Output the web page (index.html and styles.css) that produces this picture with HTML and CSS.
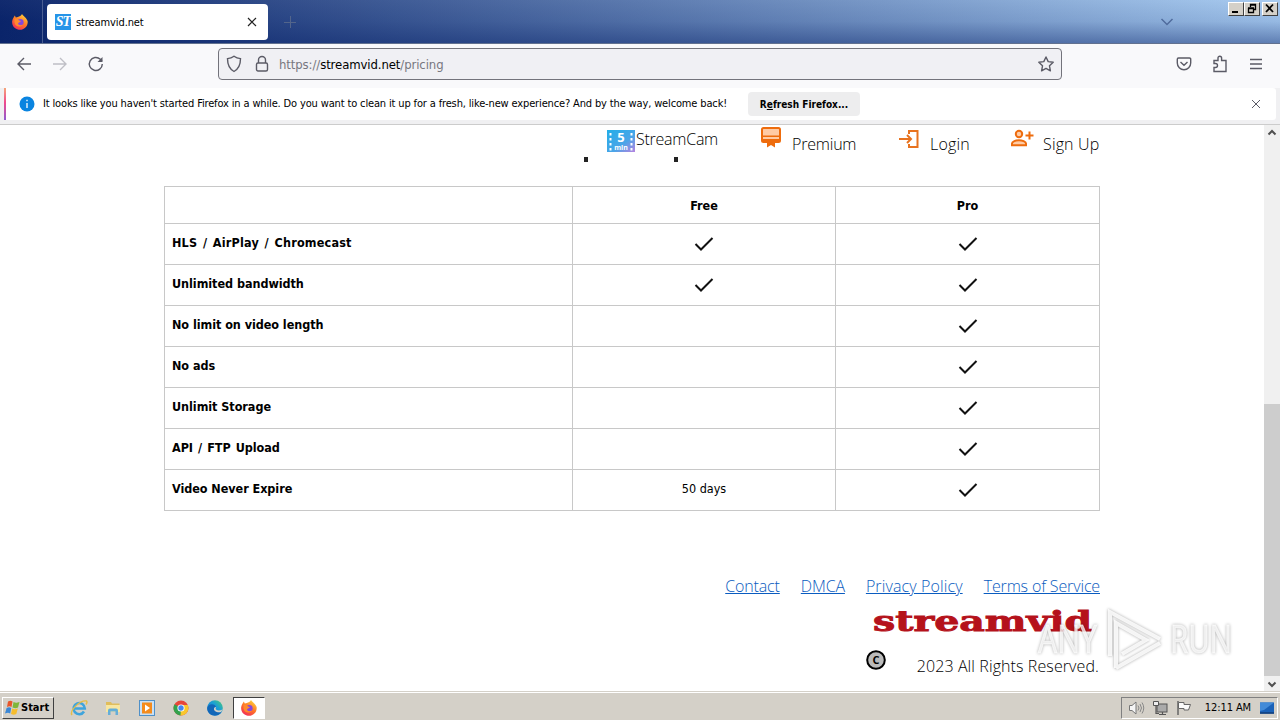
FILE: index.html
```html
<!DOCTYPE html>
<html lang="en">

<head>
    <meta charset="utf-8">
    <title>streamvid.net</title>
    <link rel="stylesheet" href="styles.css">
</head>

<body>
    <!-- shared shapes -->
    <svg class="defs" width="0" height="0">
        <defs>
            <linearGradient id="fire" x1="0.8" y1="0" x2="0.2" y2="1">
                <stop offset="0" stop-color="#ffd83a" />
                <stop offset="0.5" stop-color="#ff7427" />
                <stop offset="1" stop-color="#f0275f" />
            </linearGradient>
            <linearGradient id="film" x1="0" y1="0" x2="1" y2="1">
                <stop offset="0" stop-color="#21aee8" />
                <stop offset="0.6" stop-color="#4aa5e8" />
                <stop offset="1" stop-color="#b783e0" />
            </linearGradient>
            <linearGradient id="edge" x1="0" y1="1" x2="1" y2="0">
                <stop offset="0" stop-color="#1674c9" />
                <stop offset="0.6" stop-color="#1a9fd6" />
                <stop offset="1" stop-color="#4fcf6d" />
            </linearGradient>
            <symbol id="firefox" viewBox="0 0 16 16">
                <path d="M10 0c1 2 5 4 5.700 7.500A7.800 7.800 0 1 1 1.600 3.500L2.800 1.500l1 2 2-.6C7.500 2.500 9 2 10 0z" fill="url(#fire)" />
                <circle cx="8.300" cy="8.200" r="3.300" fill="#8548dc" />
                <path d="M2.500 5c2-1 4 0 4.500 1.500L9 7c-.5 1.500-2.500 1-3 2.500.5 2 3 2 5 1-2 3.500-8 2.500-8.500-2z" fill="#ff8a2d" />
            </symbol>
            <symbol id="check" viewBox="0 0 20 16">
                <path d="M1.500 8l5.500 5.500L18.500 2" fill="none" stroke="#111" stroke-width="2" />
            </symbol>
        </defs>
    </svg>

    <div class="titlebar">
        <div class="ff-view"><svg width="16" height="16"><use href="#firefox" /></svg></div>
        <div class="tab">
            <span class="favicon"><i>ST</i></span>
            <span class="tab-title">streamvid.net</span>
            <svg class="tab-close" width="10" height="10" viewBox="0 0 10 10"><path d="M1 1l8 8M9 1L1 9" stroke="#222" stroke-width="1.200" /></svg>
        </div>
        <svg class="new-tab" width="12" height="12" viewBox="0 0 12 12"><path d="M6.500 0v12M0 6.500h12" stroke="#53658b" /></svg>
        <svg class="all-tabs" width="14" height="8" viewBox="0 0 14 8"><path d="M1.500 1L7 6.500 12.500 1" fill="none" stroke="#506c9d" stroke-width="1.500" /></svg>
        <div class="win-buttons">
            <span><svg width="14" height="11"><path d="M3 9h6" stroke="#000" stroke-width="2" /></svg></span>
            <span><svg width="14" height="11"><path d="M5.500 4V1.500h5V6.500H8.500M5 2h6M3.500 5.500h5v4h-5zM3 5h6" fill="none" stroke="#000" stroke-width="1.300" /></svg></span>
            <span class="close"><svg width="14" height="11"><path d="M3 1.500l7 7.500M10 1.500L3 9" stroke="#000" stroke-width="1.800" /></svg></span>
        </div>
    </div>

    <div class="toolbar">
        <svg class="back" width="16" height="14" viewBox="0 0 16 14"><path d="M15 7H2M8 1L2 7l6 6" /></svg>
        <svg class="forward" width="16" height="14" viewBox="0 0 16 14"><path d="M1 7h13M8 1l6 6-6 6" /></svg>
        <svg class="reload" width="16" height="16" viewBox="0 0 16 16"><path d="M14.300 8a6.500 6.500 0 1 1-2-4.700L14 5" /><path d="M14.500 1v5h-5z" fill="#5b5b66" stroke="none" /></svg>
        <div class="urlbar">
            <svg class="shield" width="16" height="18" viewBox="0 0 16 18"><path d="M8 1.200c2 1.500 4 2.200 6.500 2.400 0 6.500-1.500 10.300-6.500 12.900C3 13.900 1.500 10.100 1.500 3.600 4 3.400 6 2.700 8 1.200z" /></svg>
            <svg class="lock" width="14" height="18" viewBox="0 0 14 18"><rect x="1.500" y="8" width="11" height="8" rx="1.500" /><path d="M3.500 8V5a3.500 3.500 0 0 1 7 0v3" /></svg>
            <span class="url">https://<b>streamvid.net</b>/pricing</span>
            <svg class="star" width="18" height="18" viewBox="0 0 18 18"><path d="M9 2l2.200 4.600 5 .7-3.700 3.500.9 5L9 13.400l-4.400 2.400.9-5L1.800 7.300l5-.7z" stroke-linejoin="round" /></svg>
        </div>
        <svg class="pocket" width="16" height="16" viewBox="0 0 16 16"><path d="M2.500 2h11a1.200 1.200 0 0 1 1.200 1.200V7a6.700 6.700 0 0 1-13.400 0V3.200A1.200 1.200 0 0 1 2.500 2zM4.500 6L8 9.300 11.500 6" /></svg>
        <svg class="ext" width="16" height="18" viewBox="0 0 16 18"><path d="M2 8.500V5.500h4V3a1.800 1.800 0 0 1 3.600 0v2.500H14V16.500H2v-4h1.500a2 2 0 0 0 0-4z" /></svg>
        <svg class="menu" width="14" height="12" viewBox="0 0 14 12"><path d="M1 1.500h12M1 6h12M1 10.500h12" /></svg>
    </div>

    <div class="notice">
        <div class="notice-inner">
            <svg class="info" width="16" height="16" viewBox="0 0 16 16"><circle cx="8" cy="8" r="7.500" fill="#0a84e0" /><path d="M8 7v5M8 3.800v1.500" stroke="#fff" stroke-width="1.300" /></svg>
            <span class="notice-text">It looks like you haven't started Firefox in a while. Do you want to clean it up for a fresh, like-new experience? And by the way, welcome back!</span>
            <button class="refresh">R<u>e</u>fresh Firefox...</button>
            <svg class="notice-close" width="10" height="10" viewBox="0 0 10 10"><path d="M1 1l8 8M9 1L1 9" stroke="#5b5b66" /></svg>
        </div>
    </div>

    <div class="viewport">
        <main>
            <nav>
                <a class="cam">
                    <svg width="28" height="22" viewBox="0 0 28 22">
                        <rect width="28" height="22" fill="url(#film)" />
                        <path d="M3.500 3v18M24.500 3v18" stroke="#fff" stroke-width="2" stroke-dasharray="2.500 2.500" />
                        <text x="14" y="12" text-anchor="middle" class="cam-num">5</text>
                        <text x="14" y="19.500" text-anchor="middle" class="cam-min">min</text>
                    </svg><span>StreamCam</span>
                </a>
                <a class="premium">
                    <svg width="20" height="22" viewBox="0 0 20 22"><rect x="1" y="1" width="18" height="14" rx="1.500" fill="#ffcba5" stroke="#ee6c0d" stroke-width="2" /><path d="M1 8.500h18V10H1zM1 12h18v3H1zM6 14h8v6.500l-4-2.500-4 2.500z" fill="#ee6c0d" /></svg>
                    <span>Premium</span>
                </a>
                <a class="login">
                    <svg width="22" height="20" viewBox="0 0 22 20"><path d="M11 5V2h8.500v16H11v-3M1 10h12M9 6l4 4-4 4" fill="none" stroke="#e8731f" stroke-width="2" /></svg>
                    <span>Login</span>
                </a>
                <a class="signup">
                    <svg width="24" height="18" viewBox="0 0 24 18"><g fill="#ffcba5" stroke="#ee6c0d" stroke-width="2"><circle cx="9" cy="5" r="3.200" /><path d="M2 16.200v-1.700c0-2 4-3.300 7-3.300s7 1.300 7 3.300v1.700zM19.500 2.500v8M15.500 6.500h8" /></g></svg>
                    <span>Sign Up</span>
                </a>
            </nav>
            <div class="dots"><i></i><i></i></div>

            <table>
                <tr><th></th><th class="free">Free</th><th>Pro</th></tr>
                <tr><th class="slashed">HLS / AirPlay / Chromecast</th><td><svg><use href="#check" /></svg></td><td><svg><use href="#check" /></svg></td></tr>
                <tr><th>Unlimited bandwidth</th><td><svg><use href="#check" /></svg></td><td><svg><use href="#check" /></svg></td></tr>
                <tr><th>No limit on video length</th><td></td><td><svg><use href="#check" /></svg></td></tr>
                <tr><th>No ads</th><td></td><td><svg><use href="#check" /></svg></td></tr>
                <tr><th>Unlimit Storage</th><td></td><td><svg><use href="#check" /></svg></td></tr>
                <tr><th class="api">API / FTP Upload</th><td></td><td><svg><use href="#check" /></svg></td></tr>
                <tr><th>Video Never Expire</th><td class="days">50 days</td><td><svg><use href="#check" /></svg></td></tr>
            </table>

            <footer>
                <div class="links">
                    <a href="#">Contact</a>
                    <a href="#">DMCA</a>
                    <a href="#" class="privacy">Privacy Policy</a>
                    <a href="#">Terms of Service</a>
                </div>
                <svg class="logo" width="220" height="28"><text x="0" y="24" textLength="219" lengthAdjust="spacingAndGlyphs">streamvid</text></svg>
                <div class="copy">
                    <svg width="20" height="20" viewBox="0 0 20 20"><circle cx="10" cy="10" r="8.800" fill="#bbb" stroke="#000" stroke-width="2" /><text x="10" y="14" text-anchor="middle" class="copy-c">C</text></svg>
                    <span>2023 All Rights Reserved.</span>
                </div>
            </footer>
        </main>
        <div class="scrollbar">
            <svg width="10" height="7" viewBox="0 0 10 7"><path d="M1.500 5.500L5 2l3.500 3.500" fill="none" stroke="#505050" stroke-width="2" /></svg>
            <div class="thumb"></div>
            <svg width="10" height="7" viewBox="0 0 10 7"><path d="M1.500 1.500L5 5l3.500-3.500" fill="none" stroke="#505050" stroke-width="2" /></svg>
        </div>
        <svg class="watermark" width="200" height="66" viewBox="0 0 200 66">
            <text x="2" y="46" textLength="59" lengthAdjust="spacingAndGlyphs">ANY</text>
            <path d="M74 49V5l50 27M80 61l44-25M80 61V16l30 17-24 14" />
            <text x="134" y="46" textLength="62" lengthAdjust="spacingAndGlyphs">RUN</text>
        </svg>
    </div>

    <div class="taskbar">
        <div class="start">
            <svg width="15" height="14" viewBox="0 0 15 14"><path d="M3 .5c2-1 3-1 4.500 0L6.500 6C5 5 4 5 2 6z" fill="#e8562a" /><path d="M8.500 1c2 1 3 1 6 0l-1.500 5.500c-2 1-3 1-5.500 0z" fill="#7fb63a" /><path d="M1.600 7c2-1 3-1 4.600 0l-1 5.500C3.500 11.500 2.500 11.500 0 12.500z" fill="#3a87d6" /><path d="M7.200 7.500c2 1 3 1 5.600 0L11.300 13c-2 1-3 1-5.300 0z" fill="#f6bd2d" /></svg>
            Start
        </div>
        <svg class="ie" width="18" height="18" viewBox="0 0 18 18"><path d="M14 12.500A5.600 5.600 0 1 1 14.800 9.500H5" fill="none" stroke="#3fa4dc" stroke-width="2.600" /><path d="M2 16C-1 12 10 1 16.500 2c1 1 .2 2.500-.5 3.500" fill="none" stroke="#e5bd47" stroke-width="1.400" /></svg>
        <svg width="18" height="18" viewBox="0 0 18 18"><path d="M2 3h5l1 1.500h7.500V13H2z" fill="#e0bd5c" /><path d="M2 6h14v7H2z" fill="#f8e6a0" /><path d="M4 16v-4.500a2 2 0 0 1 2-2h6a2 2 0 0 1 2 2V16h-2.500v-3.500h-5V16z" fill="#64aed8" /></svg>
        <svg width="18" height="18" viewBox="0 0 18 18"><rect x="1.500" y="1.500" width="15" height="15" fill="#c9e0f5" stroke="#4f90c8" /><rect x="4" y="3.500" width="10" height="11" fill="#f48b1c" /><path d="M7 5.500v7l5-3.500z" fill="#fff" /></svg>
        <svg width="18" height="18" viewBox="0 0 18 18"><circle cx="9" cy="9" r="7.500" fill="#e6463a" /><path d="M9 9L2.500 5.200A7.500 7.500 0 0 0 8.500 16.500L12 10z" fill="#32a24d" /><path d="M9 9l-.5 7.500A7.500 7.500 0 0 0 15.800 6H9z" fill="#f9c72d" /><circle cx="9" cy="9" r="3.600" fill="#fff" /><circle cx="9" cy="9" r="2.700" fill="#4385f0" /></svg>
        <svg width="18" height="18" viewBox="0 0 18 18"><circle cx="9" cy="9" r="7.800" fill="url(#edge)" /><path d="M1.200 9C2 4.500 9 4 10 8c-3 1.500-1.500 6 5.500 5-4 6-14.500 4-14.300-4z" fill="#1267b8" /><path d="M10 8c-1.500 3 2 4.500 6.500 2.500L15 13c-4 1-7.500-1-7-3.500.4-1.300 1.200-1.500 2-1.500z" fill="#d4d0c8" /></svg>
        <div class="task-active"><svg width="16" height="16"><use href="#firefox" /></svg></div>
        <div class="tray">
            <svg width="16" height="16" viewBox="0 0 16 16"><path d="M1.500 5.500H4L8 2v12l-4-3.500H1.500z" fill="#f5f5f5" stroke="#777" /><path d="M10 5.500q2 2.500 0 5M12 4q3 4 0 8M14 2.500q3.500 5.500 0 11" fill="none" stroke="#888" /></svg>
            <svg width="16" height="16" viewBox="0 0 16 16"><rect x="5" y="4" width="10" height="8" fill="#aaa" stroke="#555" /><path d="M1.500 1.500h5v4h-5z" fill="#eee" stroke="#555" /><path d="M4 5v8.500h3M7 14.500h7M10.500 12v2" fill="none" stroke="#555" stroke-width="1.200" /></svg>
            <svg width="16" height="16" viewBox="0 0 16 16"><path d="M2 1v14" stroke="#666" stroke-width="1.500" /><path d="M2.500 2.500H8v2h6.500L12.500 10H8V8.500H2.500z" fill="#fafafa" stroke="#666" /></svg>
            <span>12:11 AM</span>
            <svg width="16" height="14" viewBox="0 0 16 14"><rect x="1" y="1.500" width="14" height="11" fill="#1b62b8" /><path d="M1 1.500h14L5 9 1 10z" fill="#438bd8" /><path d="M1 12h14" stroke="#123e78" stroke-width="1.500" /></svg>
        </div>
    </div>
</body>

</html>
```
FILE: styles.css
```css
* {
    box-sizing: border-box;
}

body {
    margin: 0;
    width: 1280px;
    height: 720px;
    overflow: hidden;
    display: flex;
    flex-direction: column;
    font-family: "DejaVu Sans Condensed", "DejaVu Sans", sans-serif;
    font-size: 11px;
    color: #000;
    background: #fff;
}

svg {
    display: block;
    flex: none;
    overflow: visible;
}

.defs {
    position: absolute;
}

/* title bar */
.titlebar {
    height: 44px;
    display: flex;
    align-items: center;
    background: linear-gradient(rgba(255, 255, 255, 0.03), rgba(10, 36, 106, 0.1) 50%, rgba(10, 36, 106, 0.45)), linear-gradient(90deg, #0a246a, #a6caf0);
    border-bottom: 1px solid #62718f;
}

.ff-view {
    width: 43px;
    height: 43px;
    padding: 14px 0 0 12px;
    border-right: 1px solid #4a5e92;
}

.tab {
    width: 221px;
    height: 36px;
    margin-left: 4px;
    padding: 0 11px 0 8px;
    display: flex;
    align-items: center;
    background: #fff;
    border-radius: 4px;
}

.favicon {
    width: 16px;
    height: 16px;
    background: #2694e8;
    color: #fff;
    font: bold 14px/16px "Liberation Serif", serif;
    letter-spacing: -1px;
    text-align: center;
}

.tab-title {
    margin: 2px 0 0 5px;
    flex: 1;
    letter-spacing: -0.1px;
}

.new-tab {
    margin-left: 16px;
}

.all-tabs {
    margin-left: auto;
}

.win-buttons {
    display: flex;
    align-self: flex-start;
    margin: 2px 2px 0 54px;
}

.win-buttons span {
    width: 16px;
    height: 14px;
    background: #d4d0c8;
    border: 1px solid;
    border-color: #fff #404040 #404040 #fff;
}

.win-buttons .close {
    margin-left: 2px;
}

/* navigation */
.toolbar {
    height: 44px;
    display: flex;
    align-items: center;
    background: #f9f9fb;
    padding: 0 17px 4px 16px;
}

.toolbar svg {
    fill: none;
    stroke: #5b5b66;
    stroke-width: 1.4;
}

.toolbar .forward {
    margin-left: 20px;
    stroke: #bfbfc6;
}

.reload {
    margin-left: 20px;
}

.urlbar {
    width: 844px;
    height: 32px;
    margin-left: 114px;
    padding: 0 6px 0 7px;
    display: flex;
    align-items: center;
    background: #f0f0f4;
    border: 1px solid #73737b;
    border-radius: 4px;
}

.lock {
    margin-left: 13px;
}

.url {
    flex: 1;
    margin-left: 10px;
    font-size: 13px;
    letter-spacing: -0.1px;
    color: #77777f;
}

.url b {
    font-weight: normal;
    color: #000;
}

.pocket {
    margin-left: 114px;
}

.ext {
    margin-left: 20px;
}

.menu {
    margin-left: 21px;
}

.notice {
    height: 37px;
    background: #f0f0f2;
    border-bottom: 1px solid #ccc;
}

.notice-inner {
    width: 1272px;
    height: 32px;
    margin-left: 4px;
    padding: 0 15px 0 15px;
    display: flex;
    align-items: center;
    background: linear-gradient(#f5a57a, #f04a8c 45%, #8f5bd0) left / 2px 100% no-repeat #fff;
    border-radius: 0 3px 3px 0;
}

.notice-text {
    width: 705px;
    margin: -2px 0 0 8px;
    letter-spacing: -0.145px;
    white-space: nowrap;
}

.refresh {
    width: 112px;
    height: 24px;
    padding: 0;
    border: 0;
    border-radius: 4px;
    background: #ededee;
    font: bold 10px "DejaVu Sans Condensed", sans-serif;
}

.notice-close {
    margin-left: auto;
}

/* page */
.viewport {
    position: relative;
    height: 567px;
    display: flex;
    background: #fff;
}

main {
    width: 936px;
    margin-left: 164px;
}

nav {
    height: 32px;
    display: grid;
    grid-template-columns: 154px 137px 112px 90px;
    justify-content: end;
    font: 300 16px/24px "Open Sans", sans-serif;
    color: #000;
}

nav a {
    display: flex;
    align-items: flex-start;
    white-space: nowrap;
}

.cam svg {
    margin-top: 5px;
}

.cam span {
    margin: 2px 0 0 1px;
    letter-spacing: -0.25px;
}

.premium svg {
    margin-top: 2px;
}

.login svg,
.signup svg {
    margin-top: 4px;
}

.premium span {
    margin: 7px 0 0 11px;
    letter-spacing: -0.2px;
}

.login span {
    margin: 7px 0 0 10px;
    letter-spacing: 0.2px;
}

.signup span {
    margin: 7px 0 0 9px;
    letter-spacing: 0.15px;
}

.cam-num {
    font: bold 13px "Open Sans", sans-serif;
    fill: #fff;
}

.cam-min {
    font: bold 7px "Open Sans", sans-serif;
    fill: #fff;
}

.dots {
    display: flex;
    gap: 86px;
    height: 29px;
    padding-left: 420px;
}

.dots i {
    width: 4px;
    height: 5px;
    background: #222;
}

table {
    width: 936px;
    table-layout: fixed;
    border-collapse: collapse;
    font-size: 12.5px;
}

tr {
    height: 41px;
}

tr:first-child {
    height: 37px;
}

th,
td {
    padding: 0;
    border: 1px solid #c8c8c8;
    text-align: center;
}

th:first-child {
    width: 408px;
    padding: 0 0 3px 7px;
    text-align: left;
    letter-spacing: -0.05px;
}

.free {
    width: 263px;
}

th.slashed {
    letter-spacing: 0.2px;
    word-spacing: 1.5px;
}

th.api {
    word-spacing: 1.2px;
}

td.days {
    padding-bottom: 3px;
}

td svg {
    width: 20px;
    height: 16px;
    margin: 0 auto;
}

footer {
    margin-top: 63px;
    display: flex;
    flex-direction: column;
    align-items: flex-end;
    font: 300 16px/24px "Open Sans", sans-serif;
}

.links {
    display: flex;
    gap: 21px;
    letter-spacing: -0.14px;
}

.links a {
    color: #0a5cc0;
}

.links .privacy {
    letter-spacing: 0.12px;
}

.logo {
    margin: 9px 7px 0 0;
}

.logo text {
    font: bold 28px "DejaVu Serif", serif;
    fill: #b5121b;
    stroke: #b5121b;
    stroke-width: 0.9;
}

.copy {
    display: flex;
    align-items: flex-start;
    gap: 31px;
    margin: 15px 1px 0 0;
}

.copy-c {
    font: bold 11px "Open Sans", sans-serif;
}

.copy span {
    margin-top: 4px;
    letter-spacing: 0.1px;
}

.scrollbar {
    width: 16px;
    margin-left: auto;
    display: flex;
    flex-direction: column;
    align-items: center;
    padding: 4px 0;
    background: #f0f0f0;
}

.thumb {
    width: 16px;
    height: 272px;
    margin: auto 0 5px;
    background: #cdcdcd;
}

.watermark {
    position: absolute;
    left: 1036px;
    top: 482px;
    filter: drop-shadow(0 0 1.5px rgba(0, 0, 0, 0.4));
}

.watermark text {
    font: 38px "Open Sans", sans-serif;
    fill: rgba(255, 255, 255, 0.75);
    stroke: rgba(255, 255, 255, 0.6);
}

.watermark path {
    fill: none;
    stroke: rgba(255, 255, 255, 0.85);
    stroke-width: 4;
}

/* taskbar */
.taskbar {
    height: 28px;
    padding: 3px 2px 1px;
    display: flex;
    align-items: center;
    gap: 16px;
    background: #d4d0c8;
    border-top: 1px solid #fff;
    box-shadow: 0 -1px 0 #d4d0c8;
    z-index: 1;
}

.start {
    width: 52px;
    height: 22px;
    padding-left: 2px;
    display: flex;
    align-items: center;
    gap: 1px;
    font-weight: bold;
    border: 1px solid;
    border-color: #fff #404040 #404040 #fff;
}

.task-active {
    width: 32px;
    height: 22px;
    margin-left: -7px;
    padding: 2px 0 0 7px;
    background: #fff;
    border: 1px solid;
    border-color: #404040 #fff #fff #404040;
}

.tray {
    width: 157px;
    height: 22px;
    margin-left: auto;
    padding: 0 2px 0 6px;
    display: flex;
    align-items: center;
    gap: 8px;
    border: 1px solid;
    border-color: #808080 #fff #fff #808080;
}

.tray span {
    flex: 1;
    text-align: right;
    white-space: nowrap;
    letter-spacing: -0.1px;
}
```
